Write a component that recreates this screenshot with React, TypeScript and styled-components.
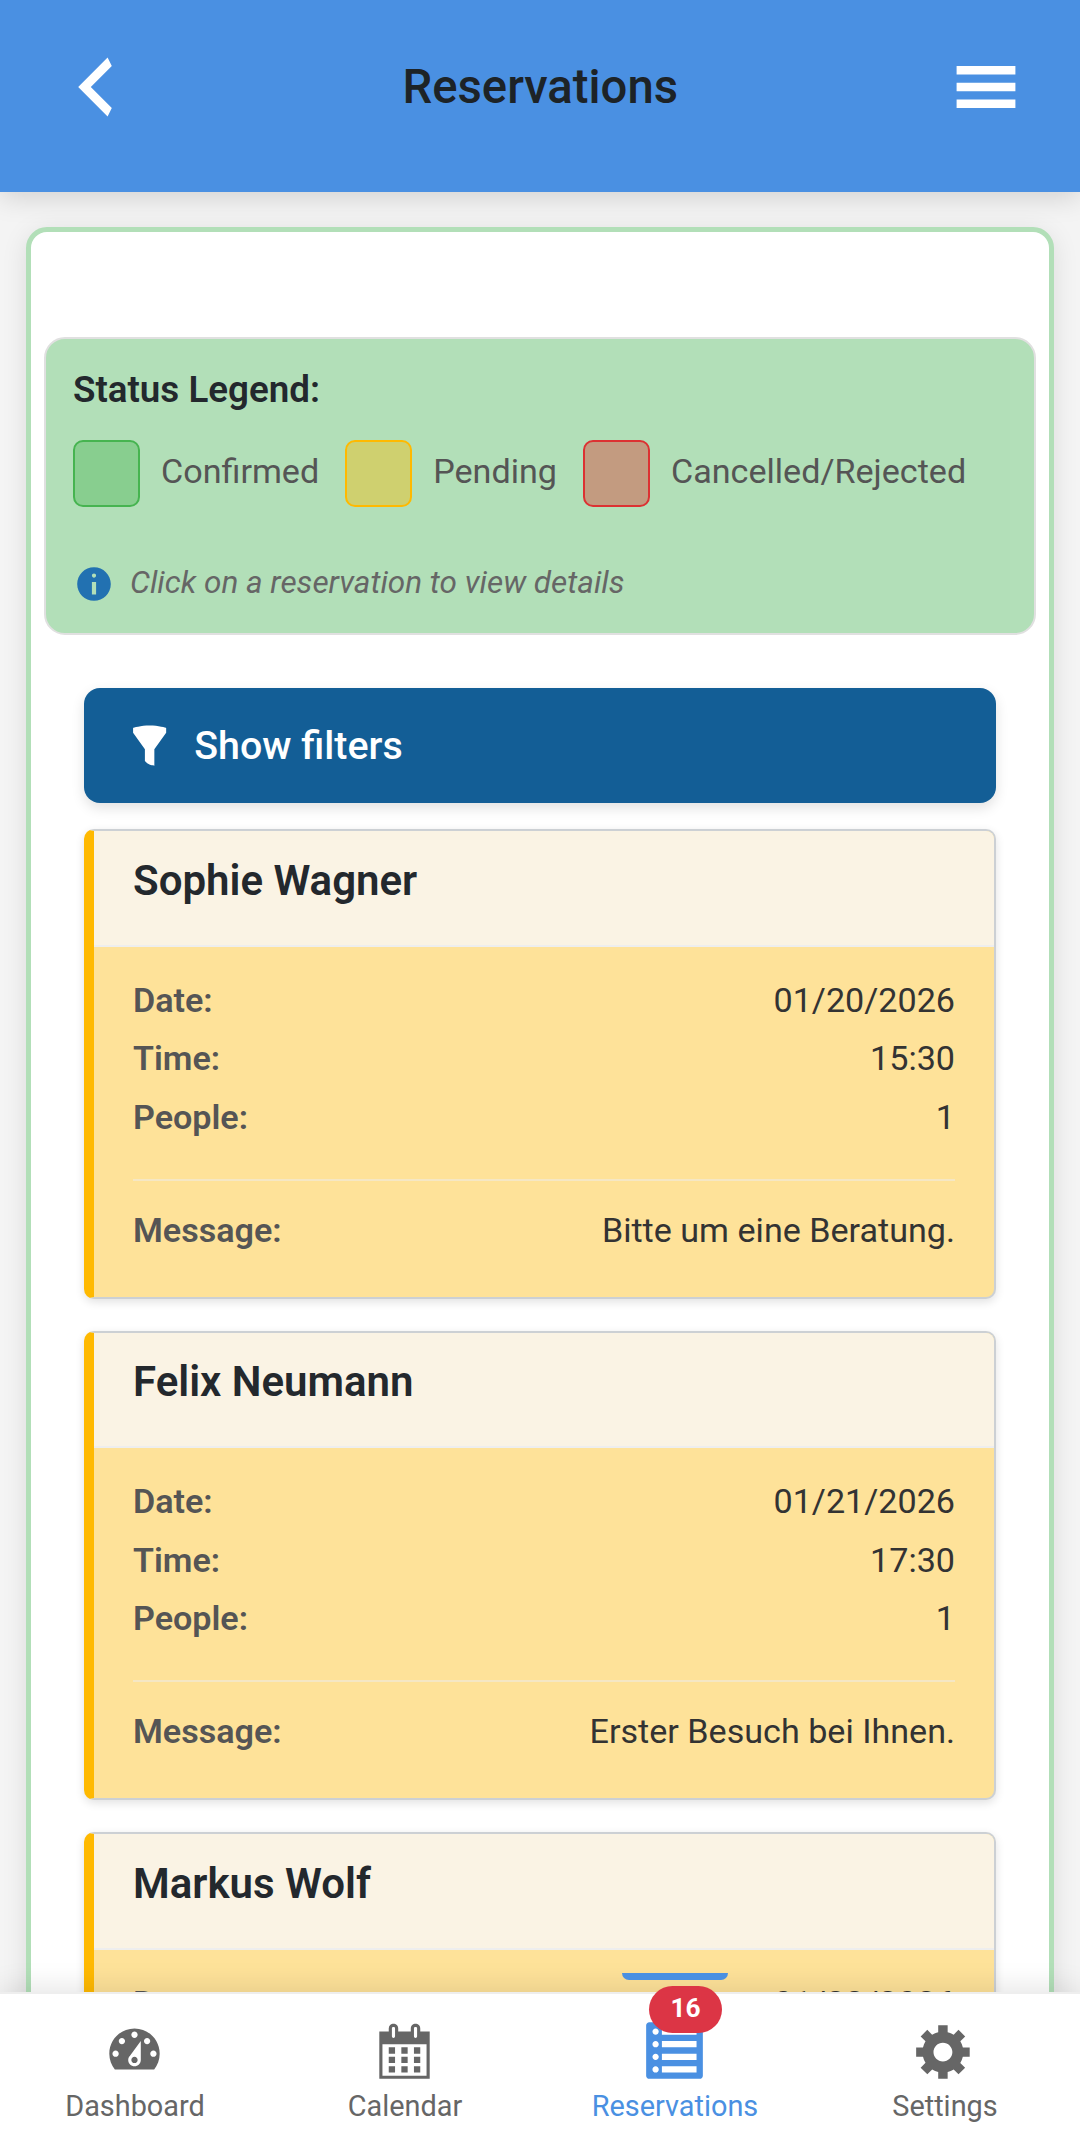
import React from "react";
import styled, { createGlobalStyle } from "styled-components";

const GlobalStyle = createGlobalStyle`
  * { box-sizing: border-box; }
  html, body { margin: 0; padding: 0; height: 2135px; overflow: hidden; }
  body {
    background: #f4f4f4;
    font-family: Roboto, "Noto Sans", sans-serif;
    color: #23282d;
  }
`;

const Screen = styled.div`
  display: flex;
  flex-direction: column;
  width: 1080px;
  height: 2135px;
  overflow: hidden;
`;

const Header = styled.header`
  display: flex;
  flex: none;
  align-items: center;
  justify-content: space-between;
  height: 192px;
  padding: 0 52px 18.5px 52.5px;
  background: #4a90e2;
  box-shadow: 0 5px 26px rgba(0, 0, 0, 0.15);
  color: #fff;
  z-index: 2;
`;

const HeaderTitle = styled.h1`
  margin: 0;
  font-size: 47.25px;
  font-weight: 500;
  line-height: 56px;
  color: #1d2327;
`;

const IconSvg = styled.svg<{ $size: number }>`
  display: block;
  flex: none;
  width: ${(p) => p.$size}px;
  height: ${(p) => p.$size}px;
  fill: currentColor;
`;

const Content = styled.main`
  flex: 1;
  min-height: 0;
  padding: 35px 26px 0;
  overflow: hidden;
`;

const Panel = styled.section`
  height: 2400px;
  padding: 105px 13px 0;
  border: 5px solid #b2dfb8;
  border-radius: 21px;
  background: #fff;
  box-shadow: 0 5px 26px rgba(0, 0, 0, 0.1);
`;

const Legend = styled.div`
  height: 298px;
  padding: 29px 26px 0 27px;
  border: 2px solid #e0e0e0;
  border-radius: 21px;
  background: #b2dfb8;
`;

const LegendTitle = styled.h2`
  margin: 0 0 28px;
  font-size: 36.75px;
  font-weight: 600;
  line-height: 44px;
`;

const LegendItems = styled.div`
  display: flex;
  gap: 26px;
`;

const LegendItem = styled.div`
  display: flex;
  align-items: center;
  gap: 21px;
  height: 67px;
`;

const Swatch = styled.span<{ $border: string; $fill: string }>`
  width: 67px;
  height: 67px;
  border: 2px solid ${(p) => p.$border};
  border-radius: 10px;
  background: ${(p) => p.$fill};
`;

const LegendLabel = styled.span`
  padding-bottom: 6px;
  font-size: 34.125px;
  line-height: 40px;
  color: #555;
  white-space: nowrap;
`;

const Hint = styled.div`
  display: flex;
  align-items: center;
  gap: 15.5px;
  margin-top: 55.5px;
  margin-left: -0.5px;
  color: #2271b1;
`;

const HintText = styled.span`
  padding-bottom: 1px;
  font-size: 31.5px;
  font-style: italic;
  line-height: 38px;
  color: #666;
`;

const FilterButton = styled.button`
  display: flex;
  align-items: center;
  gap: 21.5px;
  width: 912px;
  height: 115px;
  margin: 53px 40px 26.4px;
  padding: 0 41.5px;
  border: 0;
  border-radius: 16px;
  background: #135e96;
  box-shadow: 0 5px 13px rgba(0, 0, 0, 0.12);
  color: #fff;
  font-family: inherit;
  font-size: 39.375px;
  font-weight: 500;
  line-height: 48px;
`;

const CardList = styled.div`
  display: flex;
  flex-direction: column;
  gap: 32px;
  padding: 0 40px;
`;

const Card = styled.article`
  height: 469.5px;
  overflow: hidden;
  border: 2px solid #ccd0d4;
  border-left: 10px solid #ffb900;
  border-radius: 10px;
  background: #fee299;
  box-shadow: 0 3px 10px rgba(0, 0, 0, 0.12);
`;

const CardHeader = styled.div`
  height: 115.4px;
  padding: 24.4px 39px 0;
  border-bottom: 2px solid #eee;
  background: #faf3e4;
`;

const CardTitle = styled.h3`
  margin: 0;
  font-size: 42px;
  font-weight: 600;
  line-height: 50px;
`;

const CardBody = styled.div`
  padding: 24px 39px 0;
`;

const Row = styled.div`
  display: flex;
  justify-content: space-between;
  line-height: 58.5px;
`;

const RowLabel = styled.span`
  font-size: 34.125px;
  font-weight: 600;
  color: #555;
`;

const RowValue = styled.span`
  font-size: 34.125px;
  color: #333;
`;

const MessageRow = styled(Row)`
  margin-top: 32.6px;
  padding-top: 20px;
  border-top: 2px solid #f5e7c4;
`;

const NavBar = styled.nav`
  display: flex;
  flex: none;
  height: 143px;
  border-top: 2px solid #eee;
  background: #fff;
  box-shadow: 0 -5px 26px rgba(0, 0, 0, 0.1);
  z-index: 2;
`;

const NavItem = styled.a<{ $active?: boolean }>`
  position: relative;
  display: flex;
  flex: 1;
  flex-direction: column;
  align-items: center;
  padding-top: 25px;
  color: ${(p) => (p.$active ? "#4a90e2" : "#666")};

  > svg {
    margin-right: 1px;
  }
`;

const NavLabel = styled.span`
  margin-top: 7px;
  font-size: 28.875px;
  line-height: 34px;
`;

const ActiveMark = styled.span`
  position: absolute;
  top: -21px;
  left: 82px;
  width: 106px;
  height: 7px;
  border-radius: 0 0 8px 8px;
  background: #4a90e2;
`;

const Badge = styled.span`
  position: absolute;
  top: -8px;
  left: 109px;
  width: 73px;
  height: 47px;
  border-radius: 24px;
  background: #dc3545;
  color: #fff;
  font-size: 26.25px;
  font-weight: 700;
  line-height: 45px;
  text-align: center;
`;

const dot = (cx: number, cy: number) =>
  `M${cx} ${cy - 1}c.55 0 1 .45 1 1s-.45 1-1 1-1-.45-1-1 .45-1 1-1z`;

const paths = {
  back: "M14 5l-5 5 5 5-1 2-7-7 7-7z",
  menu: "M17 7V5H3v2h14zm0 4V9H3v2h14zm0 4v-2H3v2h14z",
  filter:
    "M3 4.5v-2s3.34-1 7-1 7 1 7 1v2l-5 7.03v6.97s-1.22-.09-2.25-.59S8 16.5 8 16.5v-4.97z",
  info: "M10 2c4.42 0 8 3.58 8 8s-3.58 8-8 8-8-3.58-8-8 3.58-8 8-8zm1 4c0-.55-.45-1-1-1s-1 .45-1 1 .45 1 1 1 1-.45 1-1zm0 9V9H9v6h2z",
  dashboard:
    "M3.76 16h12.48c1.1-1.37 1.76-3.11 1.76-5 0-4.42-3.58-8-8-8s-8 3.58-8 8c0 1.89.66 3.63 1.76 5zM10 4c.55 0 1 .45 1 1s-.45 1-1 1-1-.45-1-1 .45-1 1-1zM6 6c.55 0 1 .45 1 1s-.45 1-1 1-1-.45-1-1 .45-1 1-1zm8 0c.55 0 1 .45 1 1s-.45 1-1 1-1-.45-1-1 .45-1 1-1zm-5.37 5.55L12 7v6c0 1.1-.9 2-2 2s-2-.9-2-2c0-.57.24-1.08.63-1.45zM4 10c.55 0 1 .45 1 1s-.45 1-1 1-1-.45-1-1 .45-1 1-1zm12 0c.55 0 1 .45 1 1s-.45 1-1 1-1-.45-1-1 .45-1 1-1zm-5 3c0-.55-.45-1-1-1s-1 .45-1 1 .45 1 1 1 1-.45 1-1z",
  calendar:
    "M15 4h3v15H2V4h3V3c0-.41.15-.76.44-1.06.29-.29.65-.44 1.06-.44s.77.15 1.06.44c.29.3.44.65.44 1.06v1h4V3c0-.41.15-.76.44-1.06.29-.29.65-.44 1.06-.44s.77.15 1.06.44c.29.3.44.65.44 1.06v1zM6 3v2.5c0 .14.05.26.15.36.09.09.21.14.35.14s.26-.05.35-.14c.1-.1.15-.22.15-.36V3c0-.14-.05-.26-.15-.35-.09-.1-.21-.15-.35-.15s-.26.05-.35.15c-.1.09-.15.21-.15.35zm7 0v2.5c0 .14.05.26.14.36.1.09.22.14.36.14s.26-.05.36-.14c.09-.1.14-.22.14-.36V3c0-.14-.05-.26-.14-.35-.1-.1-.22-.15-.36-.15s-.26.05-.36.15c-.09.09-.14.21-.14.35zm4 15V8H3v10h14zM7 9v2H5V9h2zm2 0h2v2H9V9zm4 2V9h2v2h-2zm-6 1v2H5v-2h2zm2 0h2v2H9v-2zm4 2v-2h2v2h-2zm-6 1v2H5v-2h2zm4 2H9v-2h2v2zm4 0h-2v-2h2v2z",
  list:
    "M2 19h16c.55 0 1-.45 1-1V2c0-.55-.45-1-1-1H2c-.55 0-1 .45-1 1v16c0 .55.45 1 1 1z" +
    [4, 8, 12, 16].map((y) => `${dot(4, y)}M6 ${y - 1}h11v2H6z`).join(""),
  settings:
    "M18 12h-2.18c-.17.7-.44 1.35-.81 1.93l1.54 1.54-2.1 2.1-1.54-1.54c-.58.36-1.23.63-1.91.79V19H8v-2.18c-.68-.16-1.33-.43-1.91-.79l-1.54 1.54-2.12-2.12 1.54-1.54c-.36-.58-.63-1.23-.79-1.91H1V9.03h2.17c.16-.7.44-1.35.8-1.94L2.43 5.55l2.1-2.1 1.54 1.54c.58-.37 1.24-.64 1.93-.81V2h3v2.18c.68.16 1.33.43 1.91.79l1.54-1.54 2.12 2.12-1.54 1.54c.36.59.64 1.24.8 1.94H18V12zm-8.5 1.5c1.66 0 3-1.34 3-3s-1.34-3-3-3-3 1.34-3 3 1.34 3 3 3z",
};

type IconName = keyof typeof paths;

function Icon({ name, size }: { name: IconName; size: number }) {
  return (
    <IconSvg $size={size} viewBox="0 0 20 20" aria-hidden="true">
      <path fillRule="evenodd" d={paths[name]} />
    </IconSvg>
  );
}

const statuses = [
  { label: "Confirmed", border: "#46b450", fill: "#88ce8f" },
  { label: "Pending", border: "#ffb900", fill: "#cfd06f" },
  { label: "Cancelled/Rejected", border: "#dc3232", fill: "#c39b80" },
];

const reservations = [
  { name: "Sophie Wagner", date: "01/20/2026", time: "15:30", people: 1, message: "Bitte um eine Beratung." },
  { name: "Felix Neumann", date: "01/21/2026", time: "17:30", people: 1, message: "Erster Besuch bei Ihnen." },
  { name: "Markus Wolf", date: "01/22/2026", time: "", people: 0, message: "" },
];

const navItems: { label: string; icon: IconName; badge?: number }[] = [
  { label: "Dashboard", icon: "dashboard" },
  { label: "Calendar", icon: "calendar" },
  { label: "Reservations", icon: "list", badge: 16 },
  { label: "Settings", icon: "settings" },
];

function DetailRow({ label, value }: { label: string; value: string | number }) {
  return (
    <Row>
      <RowLabel>{label}</RowLabel>
      <RowValue>{value}</RowValue>
    </Row>
  );
}

export default function App() {
  return (
    <Screen>
      <GlobalStyle />
      <Header>
        <Icon name="back" size={84} />
        <HeaderTitle>Reservations</HeaderTitle>
        <Icon name="menu" size={84} />
      </Header>
      <Content>
        <Panel>
          <Legend>
            <LegendTitle>Status Legend:</LegendTitle>
            <LegendItems>
              {statuses.map((s) => (
                <LegendItem key={s.label}>
                  <Swatch $border={s.border} $fill={s.fill} />
                  <LegendLabel>{s.label}</LegendLabel>
                </LegendItem>
              ))}
            </LegendItems>
            <Hint>
              <Icon name="info" size={42} />
              <HintText>Click on a reservation to view details</HintText>
            </Hint>
          </Legend>
          <FilterButton>
            <Icon name="filter" size={47.25} />
            Show filters
          </FilterButton>
          <CardList>
            {reservations.map((r) => (
              <Card key={r.name}>
                <CardHeader>
                  <CardTitle>{r.name}</CardTitle>
                </CardHeader>
                <CardBody>
                  <DetailRow label="Date:" value={r.date} />
                  {r.time && (
                    <>
                      <DetailRow label="Time:" value={r.time} />
                      <DetailRow label="People:" value={r.people} />
                      <MessageRow>
                        <RowLabel>Message:</RowLabel>
                        <RowValue>{r.message}</RowValue>
                      </MessageRow>
                    </>
                  )}
                </CardBody>
              </Card>
            ))}
          </CardList>
        </Panel>
      </Content>
      <NavBar>
        {navItems.map((n) => (
          <NavItem key={n.label} $active={n.badge !== undefined}>
            <Icon name={n.icon} size={63} />
            <NavLabel>{n.label}</NavLabel>
            {n.badge !== undefined && (
              <>
                <ActiveMark />
                <Badge>{n.badge}</Badge>
              </>
            )}
          </NavItem>
        ))}
      </NavBar>
    </Screen>
  );
}
